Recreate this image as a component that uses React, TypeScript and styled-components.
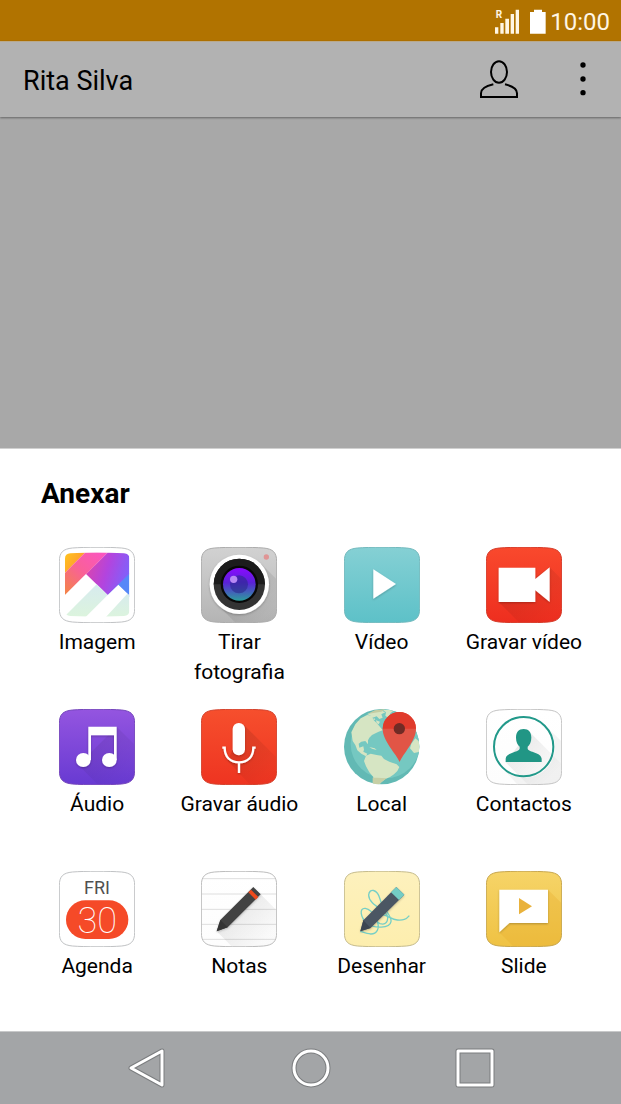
import React from "react";
import styled, { createGlobalStyle } from "styled-components";

const GlobalStyle = createGlobalStyle`
  *, *::before, *::after { box-sizing: border-box; }
  body { margin: 0; background: #a8a8a8; font-family: Roboto, "Liberation Sans", sans-serif; color: #000; }
  button { border: 0; padding: 0; margin: 0; background: none; font: inherit; color: inherit; cursor: pointer; }
  svg { display: block; }
`;

const Screen = styled.div`
  display: flex;
  flex-direction: column;
  min-height: 100vh;
`;

const StatusBar = styled.div`
  display: flex;
  align-items: center;
  justify-content: flex-end;
  height: 41px;
  padding: 2px 11px 0;
  background: #b17300;
  color: #fff6e4;
`;

const Clock = styled.time`
  margin-left: 4px;
  font-size: 24px;
  line-height: 28px;
`;

const BatteryIcon = styled.svg`
  margin-left: 10px;
`;

const Header = styled.header`
  position: relative;
  display: flex;
  align-items: center;
  height: 76px;
  padding: 2px 28px 0 23px;
  background: #b2b2b2;
  border-top: 1px solid #b9a98c;
  box-shadow: 0 1px 2px rgba(0, 0, 0, 0.4);
`;

const ContactName = styled.h1`
  flex: 1;
  margin: 0;
  font-size: 27px;
  font-weight: 400;
  line-height: 32px;
`;

const HeaderButton = styled.button<{ $width: number }>`
  display: flex;
  justify-content: center;
  width: ${(p) => p.$width}px;
`;

const HeaderActions = styled.div`
  display: flex;
  align-items: center;
  gap: 55px;
  padding-bottom: 4px;
`;

const Conversation = styled.main`
  flex: 1;
`;

const Sheet = styled.section`
  padding: 29px 26px 20px;
  background: #fff;
  border-top: 1px solid #d0d0d0;
`;

const SheetTitle = styled.h2`
  margin: 0 0 37px 15px;
  font-size: 28px;
  font-weight: 700;
  line-height: 32px;
`;

const AttachmentGrid = styled.ul`
  display: grid;
  grid-template-columns: repeat(4, 1fr);
  grid-auto-rows: minmax(140px, auto);
  row-gap: 22px;
  margin: 0;
  padding: 0;
  list-style: none;
`;

const AttachmentCell = styled.li`
  display: flex;
  justify-content: center;
  align-items: flex-start;
`;

const AttachmentButton = styled.button`
  display: flex;
  flex-direction: column;
  align-items: center;
  gap: 4px;
  max-width: 128px;
`;

const AttachmentLabel = styled.span`
  font-size: 21px;
  line-height: 30px;
  text-align: center;
`;

const NavBar = styled.nav`
  display: flex;
  align-items: center;
  justify-content: center;
  gap: 124px;
  height: 73px;
  background: #a3a5a7;
  border-top: 1px solid #c8c9ca;
`;

const NavButton = styled.button`
  display: flex;
  width: 40px;
  height: 40px;
`;

const TILE =
  "M1 44C1 16 12 6 40 3C80 0 148 0 188 3C216 6 227 16 227 44V184C227 212 216 222 188 225C148 228 80 228 40 225C12 222 1 212 1 184Z";

type TileProps = {
  id: string;
  top: string;
  bottom: string;
  edge: string;
  children: React.ReactNode;
};

function Tile({ id, top, bottom, edge, children }: TileProps) {
  return (
    <svg width="76" height="76" viewBox="0 0 228 228" aria-hidden="true">
      <defs>
        <linearGradient id={`${id}-bg`} x1="0" y1="0" x2="0" y2="1">
          <stop offset="0" stopColor={top} />
          <stop offset="1" stopColor={bottom} />
        </linearGradient>
        <linearGradient id={`${id}-shade`} gradientUnits="userSpaceOnUse" x1="90" y1="90" x2="200" y2="200">
          <stop offset="0" stopColor="#000" stopOpacity="0.14" />
          <stop offset="1" stopColor="#000" stopOpacity="0.02" />
        </linearGradient>
        <clipPath id={`${id}-clip`}>
          <path d={TILE} />
        </clipPath>
        <filter id={`${id}-drop`} x="-20%" y="-20%" width="140%" height="140%">
          <feDropShadow dx="0" dy="3" stdDeviation="3" floodColor="#000" floodOpacity="0.25" />
        </filter>
      </defs>
      <path d={TILE} fill={`url(#${id}-bg)`} />
      <g clipPath={`url(#${id}-clip)`}>{children}</g>
      <path d={TILE} fill="none" stroke={edge} strokeWidth="3" />
    </svg>
  );
}

const ImageIcon = () => (
  <Tile id="image" top="#fff" bottom="#fff" edge="#c0c2c4">
    <defs>
      <clipPath id="image-photo">
        <path d="M18 35Q18 20 34 19Q114 14 195 19Q211 20 211 35V192Q211 206 195 207Q114 211 34 207Q18 206 18 192Z" />
      </clipPath>
      <linearGradient id="image-yellow" gradientUnits="userSpaceOnUse" x1="18" y1="18" x2="66" y2="50">
        <stop offset="0" stopColor="#ffc51c" />
        <stop offset="1" stopColor="#ff9a30" />
      </linearGradient>
      <linearGradient id="image-pink" gradientUnits="userSpaceOnUse" x1="130" y1="17" x2="18" y2="130">
        <stop offset="0" stopColor="#fb55c0" />
        <stop offset="0.5" stopColor="#f9609a" />
        <stop offset="1" stopColor="#f4824c" />
      </linearGradient>
      <linearGradient id="image-violet" gradientUnits="userSpaceOnUse" x1="90" y1="60" x2="205" y2="95">
        <stop offset="0" stopColor="#d545b4" />
        <stop offset="0.45" stopColor="#b344de" />
        <stop offset="1" stopColor="#7f61fb" />
      </linearGradient>
      <linearGradient id="image-mint" x1="0" y1="0" x2="0" y2="1">
        <stop offset="0" stopColor="#d7ebef" />
        <stop offset="1" stopColor="#dcf4dd" />
      </linearGradient>
    </defs>
    <g clipPath="url(#image-photo)">
      <path d="M15 80L83 12H15Z" fill="url(#image-yellow)" />
      <path d="M15 80L83 12H151L15 148Z" fill="url(#image-pink)" />
      <path d="M151 12H214V79L140 153L75 88Z" fill="url(#image-violet)" />
      <path d="M146 144L214 77V150H180Z" fill="#5687f8" />
      <path d="M15 147L81 81L146 144L178 113L214 148V212H15Z" fill="#fff" />
      <path d="M113 112L146 144L80 210H15Z" fill="url(#image-mint)" />
      <path d="M199 134L214 148V212H139L205 140Z" fill="url(#image-mint)" />
    </g>
  </Tile>
);

const CameraIcon = () => (
  <Tile id="camera" top="#d2d2d2" bottom="#b4b4b4" edge="#ababab">
    <defs>
      <linearGradient id="camera-lens" x1="0" y1="0" x2="0" y2="1">
        <stop offset="0" stopColor="#8a0aff" />
        <stop offset="0.45" stopColor="#5a22d8" />
        <stop offset="1" stopColor="#2c9d9c" />
      </linearGradient>
    </defs>
    <path d="M180 50L228 98V228H104L52 175Z" fill="url(#camera-shade)" />
    <circle cx="115" cy="112" r="89" fill="#fff" filter="url(#camera-drop)" />
    <circle cx="115" cy="112" r="77" fill="#333" />
    <path d="M38 112A77 77 0 0 1 192 112Z" fill="#1c1c1c" />
    <circle cx="115" cy="112" r="56" fill="#080808" />
    <circle cx="115" cy="112" r="49" fill="url(#camera-lens)" />
    <circle cx="114" cy="112" r="27" fill="#2a2a8a" fillOpacity="0.6" />
    <circle cx="98" cy="97" r="11" fill="#b788f4" />
    <circle cx="196" cy="30" r="8" fill="#e09595" />
  </Tile>
);

const VideoIcon = () => (
  <Tile id="video" top="#85d0d4" bottom="#5dc1c8" edge="#72b9bd">
    <path d="M88 67L156 111L88 155Z" fill="#fff" filter="url(#video-drop)" />
  </Tile>
);

const RecordVideoIcon = () => (
  <Tile id="recvideo" top="#f9492d" bottom="#ee2e1f" edge="#d53a28">
    <path d="M191 61L228 98V228H101L38 165Z" fill="url(#recvideo-shade)" opacity="0.7" />
    <path
      d="M38 62H148V96L191 61V165L148 130V165H38Z"
      fill="#fff"
      filter="url(#recvideo-drop)"
    />
  </Tile>
);

const AudioIcon = () => (
  <Tile id="audio" top="#9455e0" bottom="#683ad2" edge="#7445bb">
    <path d="M173 53L228 108V228H118L58 168Z" fill="url(#audio-shade)" opacity="0.6" />
    <g fill="#fff" filter="url(#audio-drop)">
      <path d="M88 53H173V153H165V79H96V153H88Z" />
      <ellipse cx="73" cy="153" rx="22" ry="21" />
      <ellipse cx="151" cy="153" rx="22" ry="21" />
    </g>
  </Tile>
);

const RecordAudioIcon = () => (
  <Tile id="recaudio" top="#f64f2d" bottom="#ee3421" edge="#d4412c">
    <path d="M128 47L228 147V228H148L80 155Z" fill="url(#recaudio-shade)" opacity="0.8" />
    <g filter="url(#recaudio-drop)">
      <rect x="95" y="42" width="37" height="97" rx="18" fill="#fff" />
      <path d="M64 116H71C71 144 88 160 114 160S157 144 157 116H164M114 160V192" fill="none" stroke="#fff" strokeWidth="7" />
    </g>
  </Tile>
);

const LocationIcon = () => (
  <svg width="76" height="76" viewBox="0 0 228 228" aria-hidden="true">
    <defs>
      <clipPath id="globe-clip">
        <circle cx="113" cy="113" r="113" />
      </clipPath>
    </defs>
    <g clipPath="url(#globe-clip)">
      <rect width="228" height="228" fill="#62b9b4" />
      <circle cx="124" cy="104" r="104" fill="#75c8c1" />
      <path
        d="M22 70L34 46L50 28L70 18L84 20L88 32L100 44L110 56L116 64L104 68L96 72L84 78L76 86L72 94L72 106L64 96L52 98L44 104L46 116L58 112L60 122L58 128L70 134L66 142L52 134L40 124L34 108L26 96Z"
        fill="#d6e5c3"
      />
      <path
        d="M70 15L92 8L110 4L124 10L112 16L116 26L106 30L98 22L86 26L80 20ZM96 34L108 38L104 46L98 42ZM116 2L150 4L140 12L132 26L124 20L126 10ZM84 31L92 28L94 33ZM76 114L92 118L98 123L84 119Z"
        fill="#d6e5c3"
      />
      <path
        d="M66 140L80 134L98 138L112 140L120 150L136 158L158 166L166 174L160 186L150 196L138 204L124 210L112 220L104 228H86L88 204L76 190L66 172L60 156Z"
        fill="#d6e5c3"
      />
      <path d="M86 206L98 206L128 208L112 220L104 228H86Z" fill="#c7cfa5" />
      <path d="M214 88L228 100V128L210 132L198 118L202 104Z" fill="#d6e5c3" />
      <path d="M70 15L92 4L124 0L112 8L88 12Z" fill="#c3cda3" />
    </g>
    <path d="M167 159C157 134 116 96 116 59A50 50 0 0 1 216 59C216 96 177 134 167 159Z" fill="#e15546" />
    <path d="M116 59A50 50 0 0 1 216 59Z" fill="#e03b2c" />
    <circle cx="166" cy="59" r="17" fill="#702b25" />
  </svg>
);

const ContactsIcon = () => (
  <Tile id="contacts" top="#fff" bottom="#fdfdfd" edge="#c4c4c4">
    <path d="M130 68L228 166V228H127L58 159Z" fill="url(#contacts-shade)" opacity="0.6" />
    <path d="M180 52L228 98V228H95L52 180A90 90 0 0 0 180 52Z" fill="#000" opacity="0.04" />
    <circle cx="113" cy="113" r="89" fill="none" stroke="#22998a" strokeWidth="6" />
    <path
      d="M113 60C98 60 90 70 90 86C90 99 95 108 101 113V119C98 130 60 130 59 149V159H167V149C166 130 128 130 125 119V113C131 108 136 99 136 86C136 70 128 60 113 60Z"
      fill="#219685"
    />
  </Tile>
);

const CalendarDay = styled.text`
  font-size: 54px;
  fill: #505050;
  text-anchor: middle;
`;

const CalendarDate = styled.text`
  font-size: 108px;
  font-weight: 100;
  fill: #fff;
  text-anchor: middle;
`;

const CalendarIcon = () => (
  <Tile id="calendar" top="#fff" bottom="#fff" edge="#c0c2c4">
    <CalendarDay x="114" y="69">FRI</CalendarDay>
    <rect x="21" y="88" width="187" height="116" rx="58" fill="#f54a28" />
    <CalendarDate x="115" y="185">30</CalendarDate>
  </Tile>
);

const NotesIcon = () => (
  <Tile id="notes" top="#fff" bottom="#fdfdfd" edge="#bcbcbc">
    <path d="M0 23H228M0 69H228M0 115H228M0 160H228M0 205H228" stroke="#dedede" strokeWidth="3" />
    <path d="M179 70L228 119V228H94L47 181Z" fill="url(#notes-shade)" opacity="0.7" />
    <path d="M157 48L179 70L80 169L47 181L58 147Z" fill="#434343" filter="url(#notes-drop)" />
    <path d="M58 147L80 169L47 181Z" fill="#353535" />
    <path d="M150 56L172 78L164 86L142 64Z" fill="#f04a1c" />
  </Tile>
);

const DrawIcon = () => (
  <Tile id="draw" top="#fdf1bd" bottom="#fdeeae" edge="#c5bb8c">
    <path
      d="M49 181C70 188 90 196 100 178C110 160 88 116 64 112C44 110 50 140 68 156C90 174 138 172 141 152C144 132 116 116 108 84C100 54 76 50 74 72C74 96 106 110 120 122C142 140 128 164 108 158C90 150 94 128 112 130C134 134 142 146 160 147C178 148 186 146 196 134"
      fill="none"
      stroke="#76cfc6"
      strokeWidth="4"
    />
    <path d="M157 48L181 71L80 171L49 181L58 148Z" fill="#4c5764" filter="url(#draw-drop)" />
    <path d="M58 148L80 171L49 181Z" fill="#3c4552" />
    <path d="M157 48L181 71L165 87L141 64Z" fill="#74cdc5" />
  </Tile>
);

const SlideIcon = () => (
  <Tile id="slide" top="#f6d468" bottom="#efc243" edge="#c7a64d">
    <path d="M186 56L228 98V228H84L40 184Z" fill="#e9b030" opacity="0.35" />
    <path d="M40 56H186V156H70L40 184Z" fill="#fff" filter="url(#slide-drop)" />
    <path d="M99 81L138 106L99 130Z" fill="#e9b23c" />
  </Tile>
);

const ATTACHMENTS: { label: string; Icon: React.ComponentType }[] = [
  { label: "Imagem", Icon: ImageIcon },
  { label: "Tirar fotografia", Icon: CameraIcon },
  { label: "Vídeo", Icon: VideoIcon },
  { label: "Gravar vídeo", Icon: RecordVideoIcon },
  { label: "Áudio", Icon: AudioIcon },
  { label: "Gravar áudio", Icon: RecordAudioIcon },
  { label: "Local", Icon: LocationIcon },
  { label: "Contactos", Icon: ContactsIcon },
  { label: "Agenda", Icon: CalendarIcon },
  { label: "Notas", Icon: NotesIcon },
  { label: "Desenhar", Icon: DrawIcon },
  { label: "Slide", Icon: SlideIcon },
];

const NAV_KEYS = [
  { label: "Retroceder", shape: "M35 3V37L4 20Z" },
  { label: "Início", shape: "M20 3A17 17 0 1 1 20 37A17 17 0 1 1 20 3Z" },
  { label: "Recentes", shape: "M3 3H37V37H3Z" },
];

const RoamingMark = styled.text`
  font-size: 30px;
  font-weight: 700;
  fill: #fff6e4;
`;

export default function App() {
  return (
    <Screen>
      <GlobalStyle />
      <StatusBar>
        <svg width="26" height="26" viewBox="98 24 78 78" aria-hidden="true">
          <RoamingMark x="103" y="51">R</RoamingMark>
          <path d="M101 79H111V98H101ZM117 66H127V98H117ZM132 53H143V98H132ZM148 39H158V98H148ZM163 26H173V98H163Z" fill="#fff6e4" />
        </svg>
        <BatteryIcon width="16" height="26" viewBox="207 24 48 78" aria-hidden="true">
          <path d="M219 26H243V33H254V98H207V33H219Z" fill="#fff" />
        </BatteryIcon>
        <Clock>10:00</Clock>
      </StatusBar>
      <Header>
        <ContactName>Rita Silva</ContactName>
        <HeaderActions>
          <HeaderButton $width={38} aria-label="Contacto">
            <svg width="38" height="40" viewBox="57 177 114 120" aria-hidden="true">
              <g fill="none" stroke="#000" strokeWidth="6">
                <ellipse cx="114" cy="216" rx="24" ry="32" />
                <path d="M97 253C75 258 60 267 60 280V291H168V280C168 267 153 258 132 253" />
              </g>
            </svg>
          </HeaderButton>
          <HeaderButton $width={20} aria-label="Mais opções">
            <svg width="20" height="36" viewBox="0 0 60 108" aria-hidden="true">
              <circle cx="30" cy="12" r="8" />
              <circle cx="30" cy="54" r="8" />
              <circle cx="30" cy="95" r="8" />
            </svg>
          </HeaderButton>
        </HeaderActions>
      </Header>
      <Conversation />
      <Sheet aria-labelledby="attach-title">
        <SheetTitle id="attach-title">Anexar</SheetTitle>
        <AttachmentGrid>
          {ATTACHMENTS.map(({ label, Icon }) => (
            <AttachmentCell key={label}>
              <AttachmentButton>
                <Icon />
                <AttachmentLabel>{label}</AttachmentLabel>
              </AttachmentButton>
            </AttachmentCell>
          ))}
        </AttachmentGrid>
      </Sheet>
      <NavBar>
        {NAV_KEYS.map(({ label, shape }) => (
          <NavButton key={label} aria-label={label}>
            <svg width="40" height="40" viewBox="0 0 40 40" strokeLinejoin="round" aria-hidden="true">
              <path d={shape} fill="none" stroke="#7b7d7f" strokeWidth="5" />
              <path d={shape} fill="none" stroke="#fff" strokeWidth="3" />
            </svg>
          </NavButton>
        ))}
      </NavBar>
    </Screen>
  );
}
